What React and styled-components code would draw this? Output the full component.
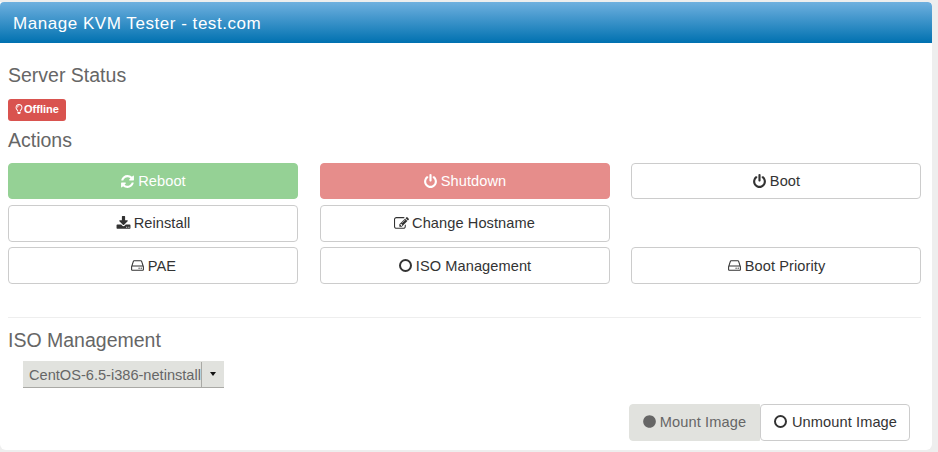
import React from 'react'
import styled, { createGlobalStyle } from 'styled-components'
import { FaRegLightbulb, FaCircle } from 'react-icons/fa'

const GlobalStyle = createGlobalStyle`
  html, body {
    margin: 0;
    padding: 0;
    height: 452px;
    overflow: hidden;
    background: #eeeeee;
    font-family: "Liberation Sans", Arial, sans-serif;
  }
`

const iconPaths = {
  refresh: 'M1639 1056q0 5-1 7-64 268-268 434.5t-478 166.5q-146 0-282.5-55t-243.5-157l-129 129q-19 19-45 19t-45-19-19-45v-448q0-26 19-45t45-19h448q26 0 45 19t19 45-19 45l-137 137q71 66 161 102t187 36q134 0 250-65t186-179q11-17 53-117 8-23 30-23h192q13 0 22.5 9.5t9.5 22.5zm25-800v448q0 26-19 45t-45 19h-448q-26 0-45-19t-19-45 19-45l138-138q-148-137-349-137-134 0-250 65t-186 179q-11 17-53 117-8 23-30 23h-199q-13 0-22.5-9.5t-9.5-22.5v-7q65-268 270-434.5t480-166.5q146 0 284 55.5t245 156.5l130-129q19-19 45-19t45 19 19 45z',
  power: 'M1664 896q0 156-61 298t-164 245-245 164-298 61-298-61-245-164-164-245-61-298q0-182 80.5-343t226.5-270q43-32 95.5-25t83.5 50q32 42 24.5 94.5t-49.5 84.5q-98 74-151.5 181t-53.5 228q0 104 40.5 198.5t109.5 163.5 163.5 109.5 198.5 40.5 198.5-40.5 163.5-109.5 109.5-163.5 40.5-198.5q0-121-53.5-228t-151.5-181q-42-32-49.5-84.5t24.5-94.5q31-43 84-50t95 25q146 109 226.5 270t80.5 343zm-640-768v640q0 52-38 90t-90 38-90-38-38-90v-640q0-52 38-90t90-38 90 38 38 90z',
  download: 'M1344 1344q0-26-19-45t-45-19-45 19-19 45 19 45 45 19 45-19 19-45zm256 0q0-26-19-45t-45-19-45 19-19 45 19 45 45 19 45-19 19-45zm128-224v320q0 40-28 68t-68 28h-1472q-40 0-68-28t-28-68v-320q0-40 28-68t68-28h465l135 136q58 56 136 56t136-56l136-136h464q40 0 68 28t28 68zm-325-569q17 41-14 70l-448 448q-18 19-45 19t-45-19l-448-448q-31-29-14-70 17-39 59-39h256v-448q0-26 19-45t45-19h256q26 0 45 19t19 45v448h256q42 0 59 39z',
  edit: 'M888 1184l116-116-152-152-116 116v56h96v96h56zm440-720q-16-16-33 1l-350 350q-17 17-1 33t33-1l350-350q17-17 1-33zm80 594v190q0 119-84.5 203.5t-203.5 84.5h-832q-119 0-203.5-84.5t-84.5-203.5v-832q0-119 84.5-203.5t203.5-84.5h832q63 0 117 25 15 7 18 23 3 17-9 29l-49 49q-14 14-32 8-23-6-45-6h-832q-66 0-113 47t-47 113v832q0 66 47 113t113 47h832q66 0 113-47t47-113v-126q0-13 9-22l64-64q15-15 35-7t20 29zm-96-738l288 288-672 672h-288v-288zm444 132l-92 92-288-288 92-92q28-28 68-28t68 28l152 152q28 28 28 68t-28 68z',
  hdd: 'M1168 1216q0 33-23.5 56.5t-56.5 23.5-56.5-23.5-23.5-56.5 23.5-56.5 56.5-23.5 56.5 23.5 23.5 56.5zm256 0q0 33-23.5 56.5t-56.5 23.5-56.5-23.5-23.5-56.5 23.5-56.5 56.5-23.5 56.5 23.5 23.5 56.5zm112 160v-320q0-13-9.5-22.5t-22.5-9.5h-1216q-13 0-22.5 9.5t-9.5 22.5v320q0 13 9.5 22.5t22.5 9.5h1216q13 0 22.5-9.5t9.5-22.5zm-1230-480h1180l-157-482q-4-13-16-21.5t-26-8.5h-782q-14 0-26 8.5t-16 21.5zm1358 160v320q0 66-47 113t-113 47h-1216q-66 0-113-47t-47-113v-320q0-25 16-75l197-606q17-53 63-86t101-33h782q55 0 101 33t63 86l197 606q16 50 16 75z',
}

const Icon = ({ name, size = 15 }) => (
  <svg width={size} height={size} viewBox="0 0 1792 1792" fill="currentColor">
    <path d={iconPaths[name]} />
  </svg>
)

const Panel = styled.div`
  width: 932px;
  height: 448px;
  margin-top: 2px;
  background: #ffffff;
  border-radius: 0 4px 6px 6px;
  overflow: hidden;
`
const PanelHeader = styled.div`
  height: 41px;
  box-sizing: border-box;
  padding: 13px 13px 0;
  background: linear-gradient(to bottom, #6fb0df, #0071b0);
  color: #ffffff;
  font-size: 17px;
  line-height: 18px;
  letter-spacing: 0.54px;
  border-radius: 4px 4px 0 0;
`
const PanelBody = styled.div`
  padding: 22px 11px 0 8px;
`
const Heading = styled.h4`
  margin: 0;
  color: #666666;
  font-size: 19.5px;
  font-weight: 400;
  line-height: 20px;
`
const Badge = styled.span`
  display: inline-flex;
  align-items: center;
  gap: 0;
  width: 58px;
  height: 22px;
  margin: 14px 0 9px;
  padding: 0 0 2px 6px;
  box-sizing: border-box;
  background: #d9534f;
  border-radius: 3px;
  color: #ffffff;
  font-size: 11px;
  font-weight: 700;
`
const StatusRow = styled.div`
  display: flex;
`
const ActionGrid = styled.div`
  display: grid;
  grid-template-columns: repeat(3, 290px);
  column-gap: 21.5px;
  row-gap: 5.8px;
  margin-top: 13px;
`
const Button = styled.button`
  display: flex;
  align-items: center;
  justify-content: center;
  gap: 3px;
  height: 36.4px;
  padding: 0;
  box-sizing: border-box;
  border: 1px solid ${(props) => props.$fill || '#cccccc'};
  border-radius: 4px;
  background: ${(props) => props.$fill || '#ffffff'};
  color: ${(props) => (props.$fill ? '#ffffff' : '#333333')};
  font-family: inherit;
  font-size: 14.6px;
  letter-spacing: 0.08px;
`
const Divider = styled.hr`
  height: 1px;
  margin: 33.6px 0 12px;
  border: 0;
  background: #eeeeee;
`
const SelectRow = styled.div`
  display: flex;
  margin: 11px 0 0 15px;
`
const Select = styled.div`
  display: flex;
  align-items: center;
  width: 201px;
  height: 27px;
  box-sizing: border-box;
  padding: 1px 0 0 6px;
  background: #e1e2de;
  border-bottom: 1px solid #a9a9a5;
  color: #666666;
  font-size: 14.6px;
`
const SelectText = styled.span`
  flex: 1;
  white-space: nowrap;
`
const SelectArrow = styled.span`
  display: flex;
  align-items: center;
  justify-content: center;
  width: 23px;
  height: 25px;
  box-sizing: border-box;
  margin-top: -1px;
  border-left: 1px solid #a9a9a5;
`
const Caret = styled.span`
  width: 0;
  height: 0;
  border-top: 4px solid #111111;
  border-left: 3.5px solid transparent;
  border-right: 3.5px solid transparent;
`
const ToggleRow = styled.div`
  display: flex;
  justify-content: flex-end;
  margin: 16px 11px 0 0;
`
const Toggle = styled.button`
  display: flex;
  align-items: center;
  justify-content: center;
  gap: 4px;
  width: ${(props) => props.$width}px;
  height: 37px;
  padding: 0 0 2px;
  box-sizing: border-box;
  border: 1px solid ${(props) => (props.$active ? '#e1e2de' : '#cccccc')};
  border-radius: ${(props) => (props.$active ? '4px 0 0 4px' : '4px')};
  background: ${(props) => (props.$active ? '#e1e2de' : '#ffffff')};
  color: ${(props) => (props.$active ? '#666666' : '#333333')};
  font-family: inherit;
  font-size: 14.6px;
  letter-spacing: 0.1px;
`
const Ring = styled.span`
  width: 13px;
  height: 13px;
  margin: 0 1px;
  box-sizing: border-box;
  border: 2px solid #333333;
  border-radius: 50%;
`

const App = () => {
  return (
    <>
      <GlobalStyle />
      <Panel>
        <PanelHeader>Manage KVM Tester - test.com</PanelHeader>
        <PanelBody>
          <Heading>Server Status</Heading>
          <StatusRow>
            <Badge><FaRegLightbulb size={10} />Offline</Badge>
          </StatusRow>
          <Heading>Actions</Heading>
          <ActionGrid>
            <Button $fill="#95d195"><Icon name="refresh" />Reboot</Button>
            <Button $fill="#e68d8b"><Icon name="power" />Shutdown</Button>
            <Button><Icon name="power" />Boot</Button>
            <Button><Icon name="download" />Reinstall</Button>
            <Button><Icon name="edit" />Change Hostname</Button>
            <span />
            <Button><Icon name="hdd" />PAE</Button>
            <Button><Ring />ISO Management</Button>
            <Button><Icon name="hdd" />Boot Priority</Button>
          </ActionGrid>
          <Divider />
          <Heading>ISO Management</Heading>
          <SelectRow>
            <Select>
              <SelectText>CentOS-6.5-i386-netinstall</SelectText>
              <SelectArrow><Caret /></SelectArrow>
            </Select>
          </SelectRow>
          <ToggleRow>
            <Toggle $active $width={131}><FaCircle size={13} />Mount Image</Toggle>
            <Toggle $width={150}><Ring />Unmount Image</Toggle>
          </ToggleRow>
        </PanelBody>
      </Panel>
    </>
  )
}

export default App
